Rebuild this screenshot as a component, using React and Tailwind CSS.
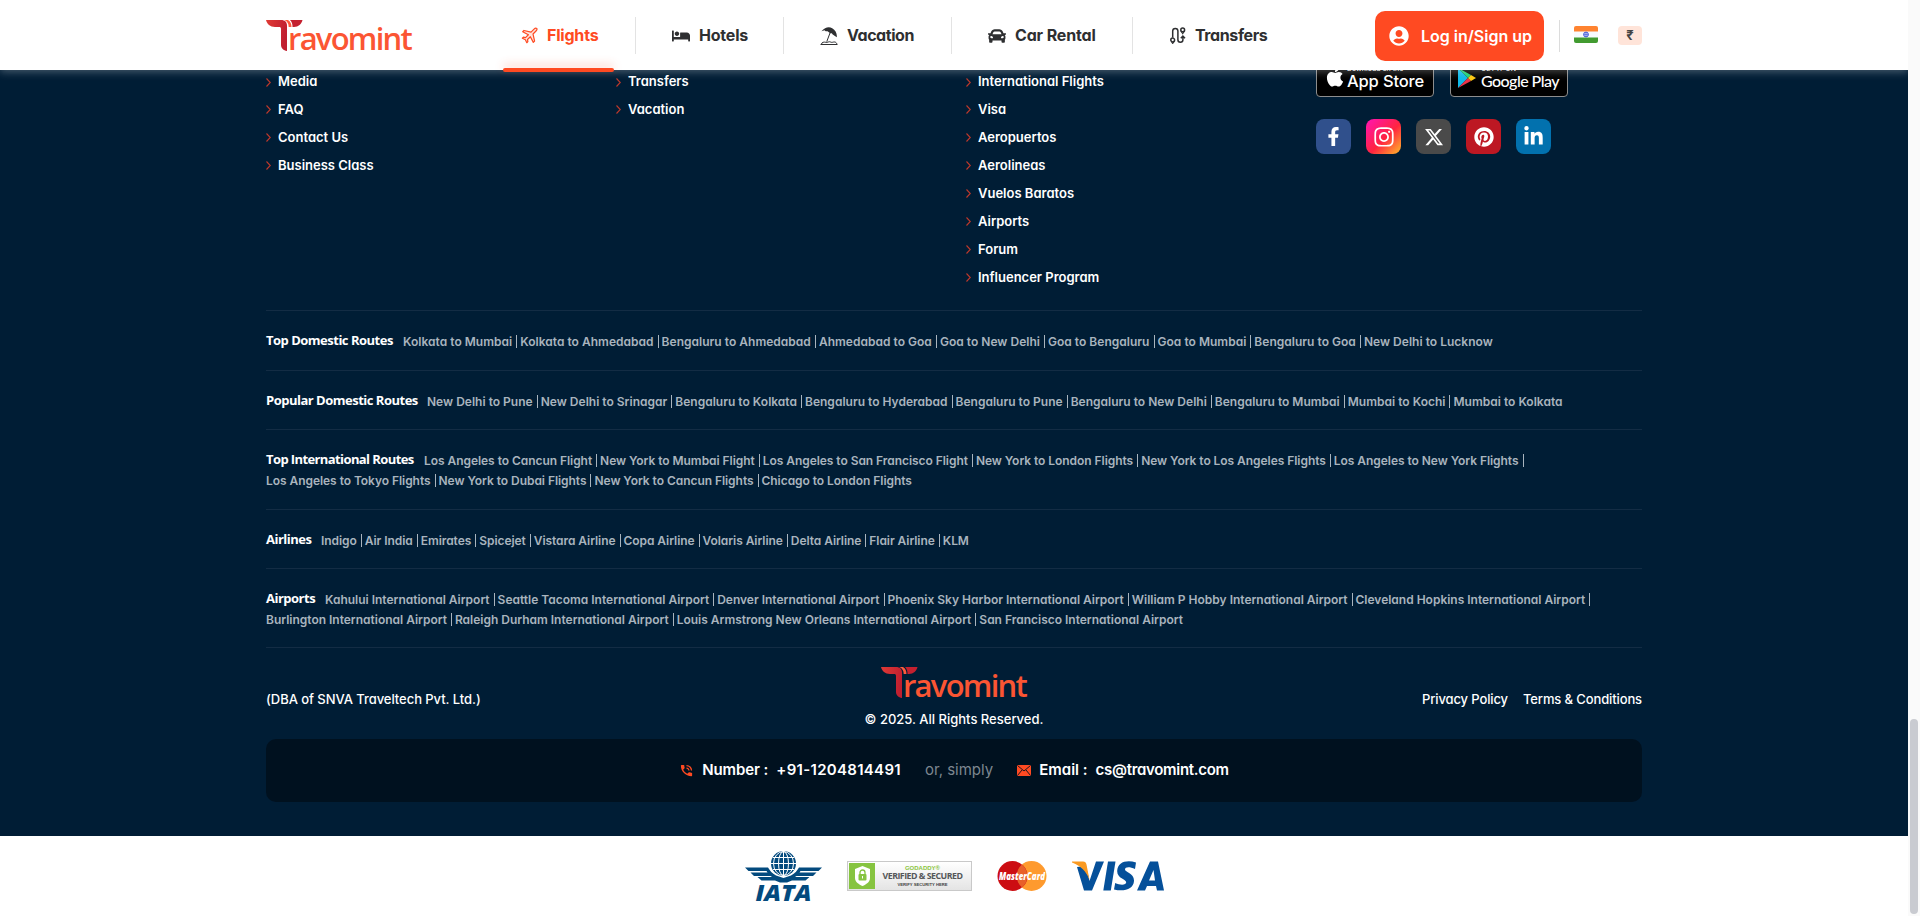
import React from "react";
import { FaFacebookF, FaInstagram, FaPinterest, FaLinkedinIn, FaApple, FaUserCircle, FaBed, FaCar } from "react-icons/fa";
import { FaXTwitter } from "react-icons/fa6";
import { MdPhoneInTalk } from "react-icons/md";

function PlaneIcon() {
  return (
    <svg width="17" height="17" viewBox="0 0 24 24" fill="#ffe3dc" stroke="#ff4a22" strokeWidth="1.7" strokeLinejoin="round">
      <path d="M14.2 7.2 18.4 3c1.2-1.2 3-1.6 3.7-1 .7.8.3 2.500-.9 3.700L17 9.900l2.200 10-1.800 1.800-4.200-8-4 4 .5 3-1.500 1.500-2-4.300-4.300-2L3.400 14.400l3 .5 4-4-8-4.200L4.200 4.900z" />
    </svg>
  );
}

function BeachIcon() {
  return (
    <svg width="18" height="18" viewBox="0 0 18 18">
      <path d="M1.500 4.200C5 .2 9 -.6 12.200 1.200c3.200 1.800 5 5 4.600 9l-4.100-2.600-.9-1.300-1.700-.1-2.500-1.900-2-.1L4.500 3.300z" fill="#2e2f31" />
      <path d="M10 6 6.800 14.500M.5 17.500h17M1.500 17c.3-1.800 2.500-2.200 4.300-1.700 1.600.5 3.300-1.300 5-.2 1.300.8 2.500-.4 4-.1 1.500.3 2 1.500 2 2" fill="none" stroke="#2e2f31" strokeWidth="1" />
    </svg>
  );
}

function RouteIcon() {
  return (
    <svg width="16" height="17" viewBox="0 0 16 17" fill="none" stroke="#2e2f31">
      <circle cx="2.700" cy="13" r="1.900" strokeWidth="1.500" />
      <path d="M1.300 14.500 2.700 16.500 4.100 14.500M11.300 4.500 12.700 6.800 14.100 4.500" strokeWidth="1.100" />
      <circle cx="12.700" cy="2.900" r="1.900" strokeWidth="1.500" />
      <path d="M2.700 10.500V4a2.600 2.600 0 0 1 5.200 0v8.700a2.500 2.500 0 0 0 5 0V9.500M10.800 11.200l2.100-2.100 2.100 2.100" strokeWidth="1.500" />
    </svg>
  );
}

function Logo({ id }) {
  return (
    <div className="relative h-[31px] w-[146px]">
      <svg className="absolute left-0 top-0" width="40" height="31" viewBox="0 0 40 31">
        <defs>
          <linearGradient id={id} x1="0" x2="1" y1="0" y2="0.300">
            <stop offset="0" stopColor="#e03a35" />
            <stop offset="1" stopColor="#c01f30" />
          </linearGradient>
        </defs>
        <path d="M0 0h15c4 0 6 2 6 6v25c-3.500-.5-6-3-6-6V9c0-1.500-.5-2-2-2H9C4 7 1 4 0 0z" fill={`url(#${id})`} />
        <path d="M18.500 0h3.500c2.500 1.500 3.500 4 3.500 7h-2.800c0-3-1.200-5.500-4.200-7z" fill="#ff5a3c" />
        <path d="M24 0h12.500c-1 4-4 7-8.500 7h-1.500C26.500 4 26 2 24 0z" fill="#c4202f" />
      </svg>
      <span className="absolute left-[22px] top-0 font-['Open_Sans'] text-[31px] font-semibold leading-[36px] tracking-[-1.75px] text-[#fb5533]">ravomint</span>
    </div>
  );
}

const NAV = [
  { label: "Flights", icon: <PlaneIcon />, active: true, cls: "w-[152px] pl-[37px] tracking-[-0.200px]" },
  { label: "Hotels", icon: <FaBed size={18} />, cls: "w-[148px] pl-[36px] tracking-[-0.200px]" },
  { label: "Vacation", icon: <BeachIcon />, cls: "w-[168px] pl-[36px] tracking-[-0.450px]" },
  { label: "Car Rental", icon: <FaCar size={18} />, cls: "w-[181px] pl-[36px] tracking-[-0.150px]" },
  { label: "Transfers", icon: <RouteIcon />, cls: "w-[180px] pl-[37px] tracking-[-0.400px]" },
];

function Flag() {
  return (
    <svg width="24" height="17" viewBox="0 0 24 17" className="rounded-[2px]">
      <rect width="24" height="17" fill="#f7faff" />
      <rect width="24" height="5.500" fill="#ff8330" />
      <rect y="11.500" width="24" height="5.500" fill="#429b30" />
      <circle cx="12" cy="8.500" r="2.400" fill="#c9d0f5" stroke="#3f55d8" strokeWidth="1" />
      <path d="M12 6.300v4.400M9.800 8.500h4.400" stroke="#3f55d8" strokeWidth="0.600" />
    </svg>
  );
}

function Header() {
  return (
    <header className="relative z-10 flex h-[70px] w-full shrink-0 bg-white pl-[266px] shadow-[0_2px_8px_rgba(255,255,255,0.28)]">
      <div className="w-[218px] pt-5"><Logo id="lg1" /></div>
      <nav className="flex w-[891px] items-start pt-[17px]">
        {NAV.map((n, i) => (
          <div key={n.label} className={"relative flex h-[37px] items-center gap-[9px] whitespace-nowrap " + n.cls + (i < 4 ? " border-r border-[#e3e3e3] " : " ") + (n.active ? "text-[#ff4a22]" : "text-[#2e2f31]")}>
            {n.icon}
            <span className="-mt-px text-[16px] font-bold">{n.label}</span>
            {n.active && <span className="absolute left-[19px] top-[51px] h-1 w-[111px] rounded-full bg-[#ff4a22] shadow-[0_-3px_10px_rgba(255,74,34,0.3)]" />}
          </div>
        ))}
      </nav>
      <div className="mt-[11px] flex h-[50px] w-[169px] items-center gap-3 rounded-[10px] bg-[#ff4a22] pl-[14px] text-white">
        <FaUserCircle size={20} />
        <span className="whitespace-nowrap text-[16px] font-semibold">Log in/Sign up</span>
      </div>
      <div className="ml-[15px] mt-5 h-8 w-px bg-[#dcdcdc]" />
      <div className="ml-[14px] mt-[26px]"><Flag /></div>
      <div className="ml-5 mt-[26px] flex h-[19px] w-6 items-center justify-center rounded-[4px] bg-[#ffe4d9] text-[13px] font-bold text-[#444]">₹</div>
    </header>
  );
}

const COLS = [
  ["Media", "FAQ", "Contact Us", "Business Class"],
  ["Transfers", "Vacation"],
  ["International Flights", "Visa", "Aeropuertos", "Aerolineas", "Vuelos Baratos", "Airports", "Forum", "Influencer Program"],
];

const SOCIAL = [
  { bg: "bg-[#30508c]", icon: <FaFacebookF size={19} /> },
  { bg: "bg-[linear-gradient(135deg,#ff14b4_0%,#ff2440_55%,#ff9a2e_90%)]", icon: <FaInstagram size={22} /> },
  { bg: "bg-[#4a4a4a]", icon: <FaXTwitter size={20} /> },
  { bg: "bg-[#bd1823]", icon: <FaPinterest size={20} /> },
  { bg: "bg-[#0271ae]", icon: <FaLinkedinIn size={21} /> },
];

function Badge({ icon, top, name, cls }) {
  return (
    <div className="flex h-[37px] w-[118px] items-end rounded-[4px] border border-[#8d8d8d] bg-black pb-[6px] pl-[7px] text-white">
      <div className="flex w-[23px] justify-start pb-[2px]">{icon}</div>
      <div className="flex flex-col whitespace-nowrap">
        <span className="text-[7px] leading-[8px]">{top}</span>
        <span className={"leading-[17px] " + cls}>{name}</span>
      </div>
    </div>
  );
}

const ROUTES = [
  { t: "Top Domestic Routes", w: "w-[137px] tracking-[-0.500px]", tr: "tracking-[0.020px]", l: [["Kolkata to Mumbai", "Kolkata to Ahmedabad", "Bengaluru to Ahmedabad", "Ahmedabad to Goa", "Goa to New Delhi", "Goa to Bengaluru", "Goa to Mumbai", "Bengaluru to Goa", "New Delhi to Lucknow"]] },
  { t: "Popular Domestic Routes", w: "w-[161px] tracking-[-0.500px]", tr: "tracking-[0.010px]", l: [["New Delhi to Pune", "New Delhi to Srinagar", "Bengaluru to Kolkata", "Bengaluru to Hyderabad", "Bengaluru to Pune", "Bengaluru to New Delhi", "Bengaluru to Mumbai", "Mumbai to Kochi", "Mumbai to Kolkata"]] },
  { t: "Top International Routes", w: "w-[158px] tracking-[-0.600px]", tr: "tracking-[-0.050px]", l: [["Los Angeles to Cancun Flight", "New York to Mumbai Flight", "Los Angeles to San Francisco Flight", "New York to London Flights", "New York to Los Angeles Flights", "Los Angeles to New York Flights"], ["Los Angeles to Tokyo Flights", "New York to Dubai Flights", "New York to Cancun Flights", "Chicago to London Flights"]] },
  { t: "Airlines", w: "w-[55px] tracking-[-0.500px]", tr: "tracking-[-0.060px]", l: [["Indigo", "Air India", "Emirates", "Spicejet", "Vistara Airline", "Copa Airline", "Volaris Airline", "Delta Airline", "Flair Airline", "KLM"]] },
  { t: "Airports", w: "w-[59px] tracking-[-0.500px]", tr: "tracking-[-0.010px]", l: [["Kahului International Airport", "Seattle Tacoma International Airport", "Denver International Airport", "Phoenix Sky Harbor International Airport", "William P Hobby International Airport", "Cleveland Hopkins International Airport"], ["Burlington International Airport", "Raleigh Durham International Airport", "Louis Armstrong New Orleans International Airport", "San Francisco International Airport"]] },
];

function RouteRow({ r }) {
  return (
    <div className={"border-t border-[#132c44] pb-[19.400px] pt-[19px] text-[12px] leading-5 " + r.tr}>
      {r.l.map((line, li) => (
        <div key={li} className="flex h-5 items-center whitespace-nowrap">
          {li === 0 && <span className={"h-5 shrink-0 font-['Open_Sans'] text-[13px] font-bold leading-[20px] text-white " + r.w}>{r.t}</span>}
          {line.map((x, i) => {
            const last = li === r.l.length - 1 && i === line.length - 1;
            return (
              <span key={x} className={"mt-[3px] mr-[3px] pr-1 leading-[13px] font-semibold text-[#a9b4be] " + (last ? "" : "border-r border-[#a9b4be]")}>{x}</span>
            );
          })}
        </div>
      ))}
    </div>
  );
}

function Iata() {
  return (
    <svg width="78" height="52" viewBox="0 0 78 52" className="overflow-visible">
      <g fill="#034a7e">
        <circle cx="38.500" cy="12.500" r="12.500" />
        <path d="M0 16.500h23c2 3 4 6 8 8l7.500 2.500 7.500-2.500c4-2 6-5 8-8h23l-3.500 3.500h-18l-1 1.500h17l-3.500 3.500H51.500l-1.500 1h14.500l-4 3.500H47l-5 2h-7l-5-2H16.500l-4-3.500H27l-1.500-1H9L5.500 21.500h17l-1-1.500h-18z" />
      </g>
      <g fill="none" stroke="#fff" strokeWidth="1">
        <ellipse cx="38.500" cy="12.500" rx="5" ry="12" />
        <ellipse cx="38.500" cy="12.500" rx="10" ry="12" />
        <path d="M38.500 0v25M26 12.500h25M28 6.500h21M28 18.500h21" />
      </g>
      <text x="38.500" y="50" textAnchor="middle" textLength="56" lengthAdjust="spacingAndGlyphs" fontFamily="Open Sans" fontWeight="800" fontStyle="italic" fontSize="22" fill="#034a7e">IATA</text>
    </svg>
  );
}

function Payments() {
  return (
    <div className="flex h-20 w-full pl-[745px]">
      <div className="mt-[15px]"><Iata /></div>
      <div className="ml-6 mt-[25px] flex h-[30px] w-[125px] border border-[#c9c9c9] bg-gradient-to-b from-white to-[#e4e4e4] p-[1px]">
        <div className="flex w-[26px] items-center justify-center bg-[#86c440]">
          <svg width="15" height="20" viewBox="0 0 15 20">
            <path d="M7.500 0 15 3v9c0 4-4 6.500-7.500 8C4 18.500 0 16 0 12V3z" fill="#fff" />
            <rect x="3.500" y="8" width="8" height="6.500" rx="1" fill="#86c440" />
            <path d="M5 8.500V6.500a2.500 2.500 0 0 1 5 0v2" fill="none" stroke="#86c440" strokeWidth="1.300" />
            <path d="M7.500 10v2.500" stroke="#fff" />
          </svg>
        </div>
        <div className="flex flex-1 flex-col items-center whitespace-nowrap pt-[2px] font-['Open_Sans']">
          <span className="font-['Liberation_Sans'] text-[6px] font-bold leading-[6px] text-[#8bc53f]">GODADDY®</span>
          <span className="text-[8.800px] font-bold leading-[11px] tracking-[-0.500px] text-[#55575a]">VERIFIED &amp; SECURED</span>
          <span className="font-['Liberation_Sans'] text-[4.200px] font-bold leading-[6px] text-[#444]">VERIFY SECURITY HERE</span>
        </div>
      </div>
      <svg className="ml-[25px] mt-[25px] overflow-visible" width="50" height="30" viewBox="0 0 50 30">
        <circle cx="34.500" cy="15" r="15" fill="#fe9a2e" />
        <circle cx="15.500" cy="15" r="15" fill="#cc0d12" />
        <path d="M25 3.500a15 15 0 0 1 0 23 15 15 0 0 1 0-23z" fill="#e8602a" />
        <text x="25" y="18.500" textAnchor="middle" textLength="46" lengthAdjust="spacingAndGlyphs" fontFamily="Open Sans" fontWeight="800" fontStyle="italic" fontSize="10" fill="#fff">MasterCard</text>
      </svg>
      <svg className="ml-[25px] mt-[25px]" width="92" height="30" viewBox="0 0 92 30">
        <g fill="#05509a">
          <path d="M14 5 17.500 20 24 .5h8L20 29.500h-8L5 6z" />
          <path d="M36 .5h7.500l-4.700 29h-7.500z" />
          <path d="M64 1.500 63 8c-5-2.300-10-2.300-10 .4 0 2.600 9.500 3.800 9 11.600-.5 8-9.500 11-20 8.500l1.200-6.500c5 2.300 11 2.300 11-.8 0-3-9.200-3.700-9-11.200C45.500 1.500 54-1.500 64 1.500z" />
          <path fillRule="evenodd" d="M78 .5h8l6 29h-7l-1-4.500h-9L73 29.500h-8zM81.500 9l-4.500 10.500h6z" />
        </g>
        <path d="M0 .5h11c2.200 0 3 1 3.500 3L17.500 19C14.500 10 8 4.500 0 1.500z" fill="#fa9a22" />
      </svg>
    </div>
  );
}

export default function App() {
  return (
    <div className="flex h-[916px] w-[1920px] overflow-hidden bg-white font-['Inter',sans-serif] [font-feature-settings:'cv11']">
      <div className="flex w-[1908px] flex-col">
        <Header />
        <footer className="flex h-[766px] shrink-0 flex-col bg-[#001d35] px-[266px] text-white">
          <div className="flex h-[240.450px] shrink-0">
            {COLS.map((c, i) => (
              <ul key={i} className="w-[350px]">
                {c.map((x, j) => (
                  <li key={x} className={"flex items-center gap-[7px] pb-[3px] text-[13px] font-semibold " + (j === 0 ? "h-[27px]" : "h-7")}>
                    <svg width="5" height="9" viewBox="0 0 5 9" fill="none" stroke="#c0392b" strokeWidth="1.100"><path d="M.5.5 4.300 4.500.5 8.500" /></svg>
                    {x}
                  </li>
                ))}
              </ul>
            ))}
            <div className="w-[326px]">
              <div className="-mt-[10px] flex gap-4">
                <Badge icon={<FaApple size={22} />} top="Download on the" name="App Store" cls="text-[16.500px] tracking-[-0.150px] font-medium [font-feature-settings:normal]" />
                <Badge icon={<svg width="18" height="20" viewBox="0 0 18 20"><path d="M0 0v20L10 10z" fill="#10b8e8" /><path d="M0 0 13 7 10 10z" fill="#1fcf74" /><path d="M0 20 13 13 10 10z" fill="#ee3248" /><path d="M13 7 18 10 13 13 10 10z" fill="#fbc711" /></svg>} top="GET IT ON" name="Google Play" cls="-mt-px mb-px font-['Lato'] text-[16px] tracking-[-0.550px] font-medium" />
              </div>
              <div className="mt-[22px] flex gap-[15px]">
                {SOCIAL.map((s, i) => (
                  <div key={i} className={"flex h-[35px] w-[35px] items-center justify-center rounded-[8px] " + s.bg}>{s.icon}</div>
                ))}
              </div>
            </div>
          </div>
          {ROUTES.map((r) => <RouteRow key={r.t} r={r} />)}
          <div className="flex h-[91.600px] shrink-0 justify-between border-t border-[#132c44] text-[13px] font-medium">
            <div className="w-[400px] pt-[42px] tracking-[-0.050px]">(DBA of SNVA Traveltech Pvt. Ltd.)</div>
            <div className="flex flex-col items-center pt-[19px]">
              <Logo id="lg2" />
              <span className="mt-3">© 2025. All Rights Reserved.</span>
            </div>
            <div className="flex w-[400px] justify-end gap-[15px] pt-[42px] tracking-[-0.120px]"><span>Privacy Policy</span><span>Terms &amp; Conditions</span></div>
          </div>
          <div className="flex h-[63px] shrink-0 items-center justify-center rounded-[10px] bg-[#00111f] text-[15px] font-semibold">
            <MdPhoneInTalk size={15} color="#ff4a22" />
            <span className="ml-2 tracking-[-0.100px]">Number :</span>
            <span className="ml-2 tracking-[0.300px]">+91-1204814491</span>
            <span className="ml-6 font-normal text-[#7d8790]">or, simply</span>
            <svg className="ml-6" width="14" height="11" viewBox="0 0 14 11"><rect width="14" height="11" rx="1" fill="#ff4a22" /><path d="M.5.5 7 6 13.500.5M.5 10.500 5 5M13.500 10.500 9 5" fill="none" stroke="#00111f" strokeWidth="0.900" /></svg>
            <span className="ml-2">Email :</span>
            <span className="ml-2 tracking-[-0.300px]">cs@travomint.com</span>
          </div>
        </footer>
        <Payments />
      </div>
      <div className="flex w-3 flex-col bg-[#fafafa] pt-[719px]">
        <div className="mx-[2px] h-[195px] rounded-full bg-[#c9cbd1]" />
      </div>
    </div>
  );
}
